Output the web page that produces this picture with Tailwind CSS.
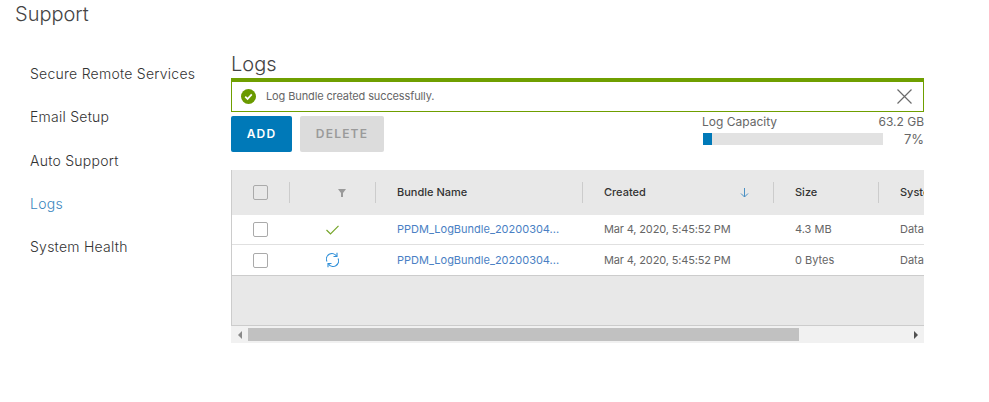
<!DOCTYPE html>
<html lang="en">
<head>
    <meta charset="UTF-8">
    <title>Support - Logs</title>
    <script src="https://cdn.jsdelivr.net/npm/@tailwindcss/browser@4"></script>
</head>
<body class="bg-white font-['Inter',sans-serif] text-[#666] overflow-hidden">
    <div class="h-[402px] w-[989px]">
        <h1 class="pl-[15px] pt-[2px] h-[40px] text-[20px] leading-[24px] font-light text-[#444]">Support</h1>

        <div class="flex">
            <!-- Sidebar -->
            <nav class="w-[231px] pl-[30px] pt-[24px] text-[14px] leading-[20px] tracking-[0.25px] font-light flex flex-col gap-[23.25px] text-[#333]">
                <a>Secure Remote Services</a>
                <a>Email Setup</a>
                <a>Auto Support</a>
                <a class="text-[#3a86bd]">Logs</a>
                <a>System Health</a>
            </nav>

            <!-- Main -->
            <main class="w-[693px]">
                <h2 class="pt-[12px] h-[38px] text-[20px] leading-[24px] font-light text-[#444]">Logs</h2>

                <div class="h-[34px] border border-[#6f9f00] border-t-4 flex items-center pl-[9px] pr-[11px]">
                    <svg class="w-[15px] h-[15px]" viewBox="0 0 16 16">
                        <circle cx="8" cy="8" r="8" fill="#6a9a00"/>
                        <path d="M4.5 8.2 7 10.6 11.5 5.8" fill="none" stroke="#fff" stroke-width="1.8"/>
                    </svg>
                    <span class="ml-[10px] text-[11px] tracking-[-0.12px] text-[#666]">Log Bundle created successfully.</span>
                    <svg class="ml-auto w-[15px] h-[15px]" viewBox="0 0 15 15">
                        <path d="M.5.5 14.5 14.5M14.5.5.5 14.5" stroke="#6b6b6b" stroke-width="1.2"/>
                    </svg>
                </div>

                <div class="flex mt-[4px] h-[36px]">
                    <button class="w-[61px] h-[36px] rounded-[2px] bg-[#0079b8] text-white text-[12px] font-semibold tracking-[1.2px]">ADD</button>
                    <button class="ml-[8px] w-[84px] h-[36px] rounded-[2px] bg-[#dcdcdc] text-[#9a9a9a] text-[12px] font-semibold tracking-[1.2px]">DELETE</button>
                    <div class="ml-[318px] w-[222px] text-[12px] leading-[14px]">
                        <div class="flex justify-between mt-[-1px]">
                            <span>Log Capacity</span>
                            <span>63.2 GB</span>
                        </div>
                        <div class="flex items-center justify-between mt-[3px]">
                            <div class="ml-[1px] w-[180px] h-[12px] bg-[#e2e2e2]">
                                <div class="h-full bg-[#0079b8]" style="width: 5%"></div>
                            </div>
                            <span class="text-[13px]">7%</span>
                        </div>
                    </div>
                </div>

                <!-- Table -->
                <div class="mt-[18px] border-l border-[#ccc] overflow-hidden">
                    <div class="grid grid-cols-[57px_86px_207px_191px_105px_100px] h-[45px] bg-[#e8e8e8] items-center text-[11px] font-medium text-[#333]">
                        <div class="pl-[21px]"><div class="w-[15px] h-[15px] rounded-[2px] border border-[#aaa]"></div></div>
                        <div class="h-[21px] border-l border-[#ccc] flex items-center justify-center pl-[18px]">
                            <svg class="w-[8px] h-[8px]" viewBox="0 0 8 8"><path d="M0 0H8L5 4V8H3V4Z" fill="#9a9a9a"/></svg>
                        </div>
                        <div class="h-[21px] border-l border-[#ccc] flex items-center pl-[21px]">Bundle Name</div>
                        <div class="h-[21px] border-l border-[#ccc] flex items-center pl-[21px] pr-[24px] justify-between">
                            <span>Created</span>
                            <svg class="w-[9px] h-[10px]" viewBox="0 0 9 10"><path d="M4.5 0V9M1 5.5 4.5 9 8 5.500" fill="none" stroke="#4a90c4"/></svg>
                        </div>
                        <div class="h-[21px] border-l border-[#ccc] flex items-center pl-[21px]">Size</div>
                        <div class="h-[21px] border-l border-[#ccc] flex items-center pl-[21px] whitespace-nowrap">System</div>
                    </div>

                    <div class="grid grid-cols-[57px_86px_207px_191px_105px_100px] h-[30px] border-b border-[#e0e0e0] items-center text-[11px]">
                        <div class="pl-[21px]"><div class="w-[15px] h-[15px] rounded-[2px] border border-[#aaa]"></div></div>
                        <div class="flex justify-center">
                            <svg class="w-[13px] h-[10px]" viewBox="0 0 13 10"><path d="M.5 5 4.5 9 12.5 .8" fill="none" stroke="#76a52a" stroke-width="1.2"/></svg>
                        </div>
                        <div class="pl-[22px] text-[#4a7fc4] whitespace-nowrap">PPDM_LogBundle_20200304...</div>
                        <div class="pl-[22px] tracking-[-0.15px] whitespace-nowrap">Mar 4, 2020, 5:45:52 PM</div>
                        <div class="pl-[22px]">4.3 MB</div>
                        <div class="pl-[22px] whitespace-nowrap">Data Domain</div>
                    </div>

                    <div class="grid grid-cols-[57px_86px_207px_191px_105px_100px] h-[30px] items-center text-[11px]">
                        <div class="pl-[21px]"><div class="w-[15px] h-[15px] rounded-[2px] border border-[#aaa]"></div></div>
                        <div class="flex justify-center">
                            <svg class="w-[13px] h-[16px]" viewBox="0 0 13 16" fill="none" stroke="#2f8fd8" stroke-width="1.1">
                                <path d="M1 9.500A5.500 5.500 0 0 1 10.500 4"/>
                                <path d="M11 .8V4.500H7.500"/>
                                <path d="M12 6.500A5.500 5.500 0 0 1 2.500 12"/>
                                <path d="M2 15.200V11.500H5.500"/>
                            </svg>
                        </div>
                        <div class="pl-[22px] text-[#4a7fc4] whitespace-nowrap">PPDM_LogBundle_20200304...</div>
                        <div class="pl-[22px] tracking-[-0.15px] whitespace-nowrap">Mar 4, 2020, 5:45:52 PM</div>
                        <div class="pl-[22px]">0 Bytes</div>
                        <div class="pl-[22px] whitespace-nowrap">Data Domain</div>
                    </div>

                    <div class="h-[51px] bg-[#e8e8e8] border-y border-[#ccc]"></div>
                </div>

                <!-- Scrollbar -->
                <div class="h-[17px] bg-[#f1f1f1] flex items-center">
                    <div class="w-[17px] flex justify-center">
                        <div class="w-0 h-0 border-y-[4px] border-y-transparent border-r-[4px] border-r-[#8a8a8a]"></div>
                    </div>
                    <div class="w-[551px] h-[13px] bg-[#c1c1c1]"></div>
                    <div class="ml-auto w-[17px] flex justify-center">
                        <div class="w-0 h-0 border-y-[4px] border-y-transparent border-l-[4px] border-l-[#505050]"></div>
                    </div>
                </div>
            </main>
        </div>
    </div>
</body>
</html>
